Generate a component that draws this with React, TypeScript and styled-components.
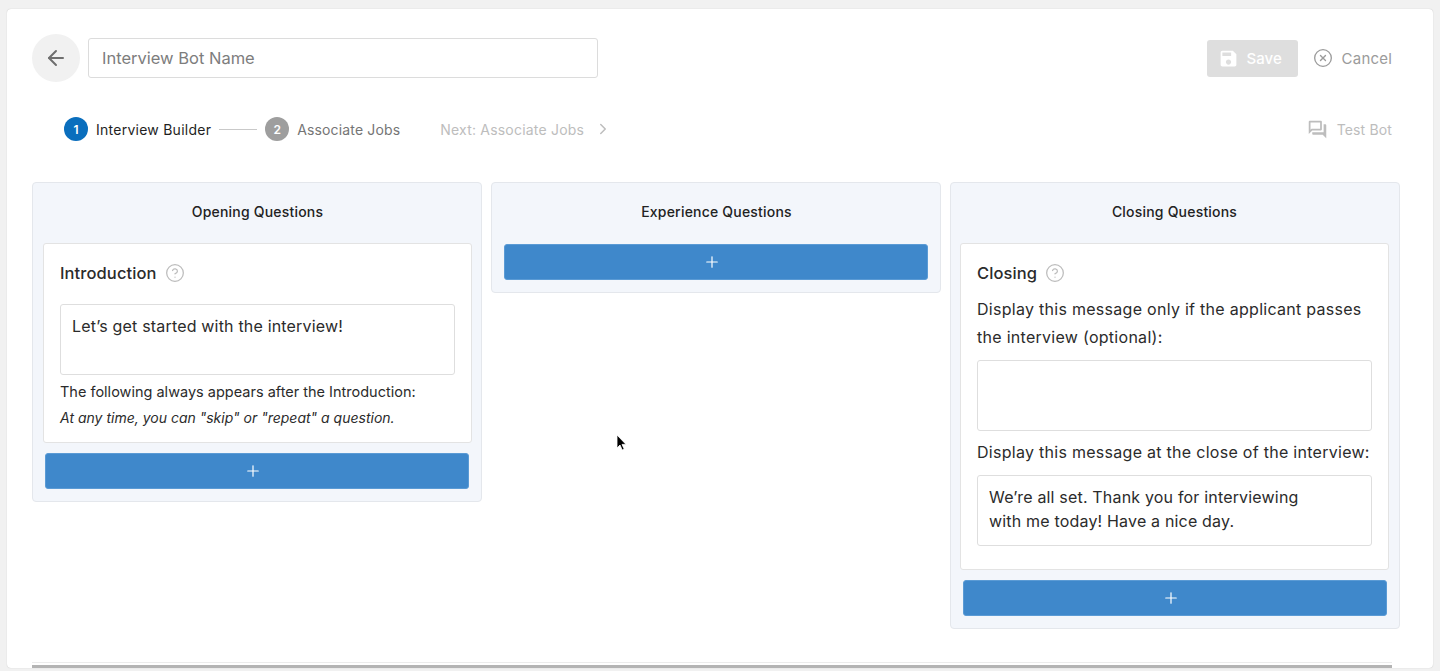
import React from "react";
import styled, { createGlobalStyle } from "styled-components";
import { ArrowLeft, ChevronRight, CircleHelp, CircleX, Plus } from "lucide-react";

const GlobalStyle = createGlobalStyle`
  html, body {
    margin: 0;
    height: 100%;
    overflow: hidden;
    background: #f1f1f1;
  }
  * {
    box-sizing: border-box;
  }
`;

const Page = styled.div`
  position: relative;
  height: 671px;
  padding: 9px 7px 3px;
  font-family: Inter, "Noto Sans", sans-serif;
  color: #2b2b2b;
`;

const Sheet = styled.div`
  display: flex;
  flex-direction: column;
  height: 100%;
  padding: 25px 33px 0 25px;
  background: #fff;
  border-radius: 4px;
  box-shadow: 0 0 1px rgba(0, 0, 0, 0.25);
`;

const Toolbar = styled.div`
  display: flex;
  align-items: center;
  height: 48px;
  padding-right: 8px;
`;

const BackButton = styled.button`
  display: flex;
  align-items: center;
  justify-content: center;
  width: 48px;
  height: 48px;
  padding: 0;
  border: 0;
  border-radius: 50%;
  background: #f1f1f1;
  color: #6f6f6f;
`;

const NameInput = styled.input`
  width: 510px;
  height: 40px;
  margin-left: 8px;
  padding: 0 13px;
  border: 1px solid #dcdcdc;
  border-radius: 3px;
  background: #fff;
  font: 16.5px Inter, sans-serif;
  outline: none;

  &::placeholder {
    color: #7d7d7d;
    opacity: 1;
  }
`;

const SaveButton = styled.button`
  display: flex;
  align-items: center;
  gap: 8px;
  width: 91px;
  height: 37px;
  margin-left: auto;
  padding: 0 11px;
  border: 0;
  border-radius: 3px;
  background: #dedede;
  color: #fff;
  font: 500 15px Inter, sans-serif;
`;

const CancelAction = styled.span`
  display: flex;
  align-items: center;
  gap: 9px;
  margin-left: 15px;
  color: #9b9b9b;
  font-size: 15px;
  letter-spacing: 0.2px;
`;

const TestAction = styled.span`
  display: flex;
  align-items: center;
  gap: 9px;
  margin-left: auto;
  color: #bdbdbd;
  font-size: 14px;
  letter-spacing: 0.15px;
`;

const StepBar = styled.div`
  display: flex;
  align-items: center;
  height: 24px;
  margin-top: 35px;
  padding: 0 8px 0 32px;
`;

const StepCircle = styled.span<{ $active?: boolean }>`
  display: flex;
  align-items: center;
  justify-content: center;
  width: 24px;
  height: 24px;
  border-radius: 50%;
  background: ${(props) => (props.$active ? "#0a6ebd" : "#9e9e9e")};
  color: #fff;
  font-size: 12px;
  font-weight: 600;
`;

const StepLabel = styled.span<{ $active?: boolean }>`
  margin-left: 8px;
  color: ${(props) => (props.$active ? "#1f1f1f" : "#757575")};
  font-size: 14px;
  letter-spacing: ${(props) => (props.$active ? 0.25 : 0.15)}px;
`;

const StepLine = styled.span`
  width: 38px;
  height: 1px;
  margin: 0 8px;
  background: #c9c9c9;
`;

const NextStep = styled.span`
  display: flex;
  align-items: center;
  gap: 10px;
  margin-left: 40px;
  color: #bdbdbd;
  font-size: 14px;
  letter-spacing: 0.2px;
`;

const Board = styled.div`
  display: grid;
  grid-template-columns: repeat(3, 450px);
  gap: 9px;
  align-items: start;
  margin-top: 41px;
`;

const Column = styled.section<{ $tight?: boolean }>`
  padding: 0 ${(props) => (props.$tight ? 10 : 9)}px 12px
    ${(props) => (props.$tight ? 9 : 10)}px;
  border: 1px solid #e4e7ec;
  border-radius: 4px;
  background: #f3f6fb;
`;

const ColumnTitle = styled.h2`
  height: 60px;
  margin: 0;
  font-size: 14px;
  font-weight: 500;
  line-height: 58px;
  letter-spacing: 0.2px;
  text-align: center;
  color: #222;
`;

const QuestionCard = styled.div`
  padding: 15px 16px 0;
  border: 1px solid #e3e3e3;
  border-radius: 3px;
  background: #fff;
`;

const CardHeading = styled.div`
  display: flex;
  align-items: center;
  gap: 8px;
  height: 28px;
  font-size: 16.5px;
  font-weight: 500;
  letter-spacing: 0.1px;
  color: #2b2b2b;

  svg {
    color: #bcbcbc;
  }
`;

const MessageBox = styled.textarea<{ $top: number; $bottom?: number }>`
  display: block;
  width: 100%;
  height: 71px;
  margin: ${(props) => props.$top}px 0 ${(props) => props.$bottom ?? 0}px;
  padding: 9px 11px 7px;
  border: 1px solid #dedede;
  border-radius: 3px;
  background: #fff;
  color: #2b2b2b;
  font: 16px/24px Inter, sans-serif;
  letter-spacing: 0.18px;
  resize: none;
  outline: none;
`;

const Note = styled.p`
  margin: 4px 0 0;
  font-size: 14.5px;
  line-height: 26px;
  color: #2b2b2b;
`;

const ItalicNote = styled.p`
  margin: 0;
  padding-bottom: 11px;
  font-size: 14px;
  font-style: italic;
  line-height: 26px;
  color: #2b2b2b;
`;

const Prompt = styled.p<{ $top: number }>`
  margin: ${(props) => props.$top}px 0 0;
  font-size: 16px;
  line-height: 28px;
  letter-spacing: 0.28px;
  color: #2b2b2b;
`;

const AddButton = styled.button<{ $flush?: boolean; $inset?: number }>`
  display: flex;
  align-items: center;
  justify-content: center;
  width: 424px;
  height: 36px;
  margin: ${(props) => (props.$flush ? 1 : 10)}px 0 0
    ${(props) => props.$inset ?? 2}px;
  padding: 0 9px 0 0;
  border: 1px solid #5b9bd5;
  border-radius: 3px;
  background: #3f88cb;
  color: #fff;
`;

const FooterRule = styled.div`
  height: 6px;
  margin-top: auto;
  margin-right: 8px;
  border-top: 1px solid #ececec;
  border-bottom: 3px solid #b4b4b4;
`;

const Pointer = styled.svg`
  position: absolute;
  left: 616px;
  top: 434px;
`;

const SaveIcon = () => (
  <svg width="21" height="21" viewBox="0 0 24 24" fill="#fff">
    <path d="M17 3H5c-1.11 0-2 .9-2 2v14c0 1.1.89 2 2 2h14c1.1 0 2-.9 2-2V7l-4-4zm-5 16c-1.66 0-3-1.34-3-3s1.34-3 3-3 3 1.34 3 3-1.34 3-3 3zm3-10H5V5h10v4z" />
  </svg>
);

const ForumIcon = () => (
  <svg width="21" height="21" viewBox="0 0 24 24" fill="#bdbdbd">
    <path d="M15 4v7H5.17L4 12.17V4h11m1-2H3c-.55 0-1 .45-1 1v14l4-4h10c.55 0 1-.45 1-1V3c0-.55-.45-1-1-1zm5 4h-2v9H6v2c0 .55.45 1 1 1h11l4 4V7c0-.55-.45-1-1-1z" />
  </svg>
);

const AddQuestion = ({ flush, inset }: { flush?: boolean; inset?: number }) => (
  <AddButton type="button" $flush={flush} $inset={inset}>
    <Plus size={18} strokeWidth={1.6} />
  </AddButton>
);

const App = () => {
  return (
    <Page>
      <GlobalStyle />
      <Sheet>
        <Toolbar>
          <BackButton type="button">
            <ArrowLeft size={24} strokeWidth={2} />
          </BackButton>
          <NameInput placeholder="Interview Bot Name" />
          <SaveButton type="button">
            <SaveIcon />
            Save
          </SaveButton>
          <CancelAction>
            <CircleX size={20} strokeWidth={1.6} />
            Cancel
          </CancelAction>
        </Toolbar>

        <StepBar>
          <StepCircle $active>1</StepCircle>
          <StepLabel $active>Interview Builder</StepLabel>
          <StepLine />
          <StepCircle>2</StepCircle>
          <StepLabel>Associate Jobs</StepLabel>
          <NextStep>
            Next: Associate Jobs
            <ChevronRight size={18} strokeWidth={2} />
          </NextStep>
          <TestAction>
            <ForumIcon />
            Test Bot
          </TestAction>
        </StepBar>

        <Board>
          <Column>
            <ColumnTitle>Opening Questions</ColumnTitle>
            <QuestionCard>
              <CardHeading>
                Introduction
                <CircleHelp size={20} strokeWidth={1.5} />
              </CardHeading>
              <MessageBox
                $top={17}
                readOnly
                defaultValue="Let’s get started with the interview!"
              />
              <Note>The following always appears after the Introduction:</Note>
              <ItalicNote>
                At any time, you can "skip" or "repeat" a question.
              </ItalicNote>
            </QuestionCard>
            <AddQuestion />
          </Column>

          <Column>
            <ColumnTitle>Experience Questions</ColumnTitle>
            <AddQuestion flush />
          </Column>

          <Column $tight>
            <ColumnTitle>Closing Questions</ColumnTitle>
            <QuestionCard>
              <CardHeading>
                Closing
                <CircleHelp size={20} strokeWidth={1.5} />
              </CardHeading>
              <Prompt $top={8}>
                Display this message only if the applicant passes the interview
                (optional):
              </Prompt>
              <MessageBox $top={9} readOnly />
              <Prompt $top={7}>
                Display this message at the close of the interview:
              </Prompt>
              <MessageBox
                $top={9}
                $bottom={23}
                readOnly
                defaultValue={
                  "We’re all set. Thank you for interviewing\nwith me today! Have a nice day."
                }
              />
            </QuestionCard>
            <AddQuestion inset={3} />
          </Column>
        </Board>

        <FooterRule />
      </Sheet>

      <Pointer width="12" height="18" viewBox="0 0 12 18">
        <path
          d="M1 1v13l3-3 2.2 5 2-.9L6 10.4h4z"
          fill="#000"
          stroke="#fff"
          strokeWidth="0.8"
        />
      </Pointer>
    </Page>
  );
};

export default App;
